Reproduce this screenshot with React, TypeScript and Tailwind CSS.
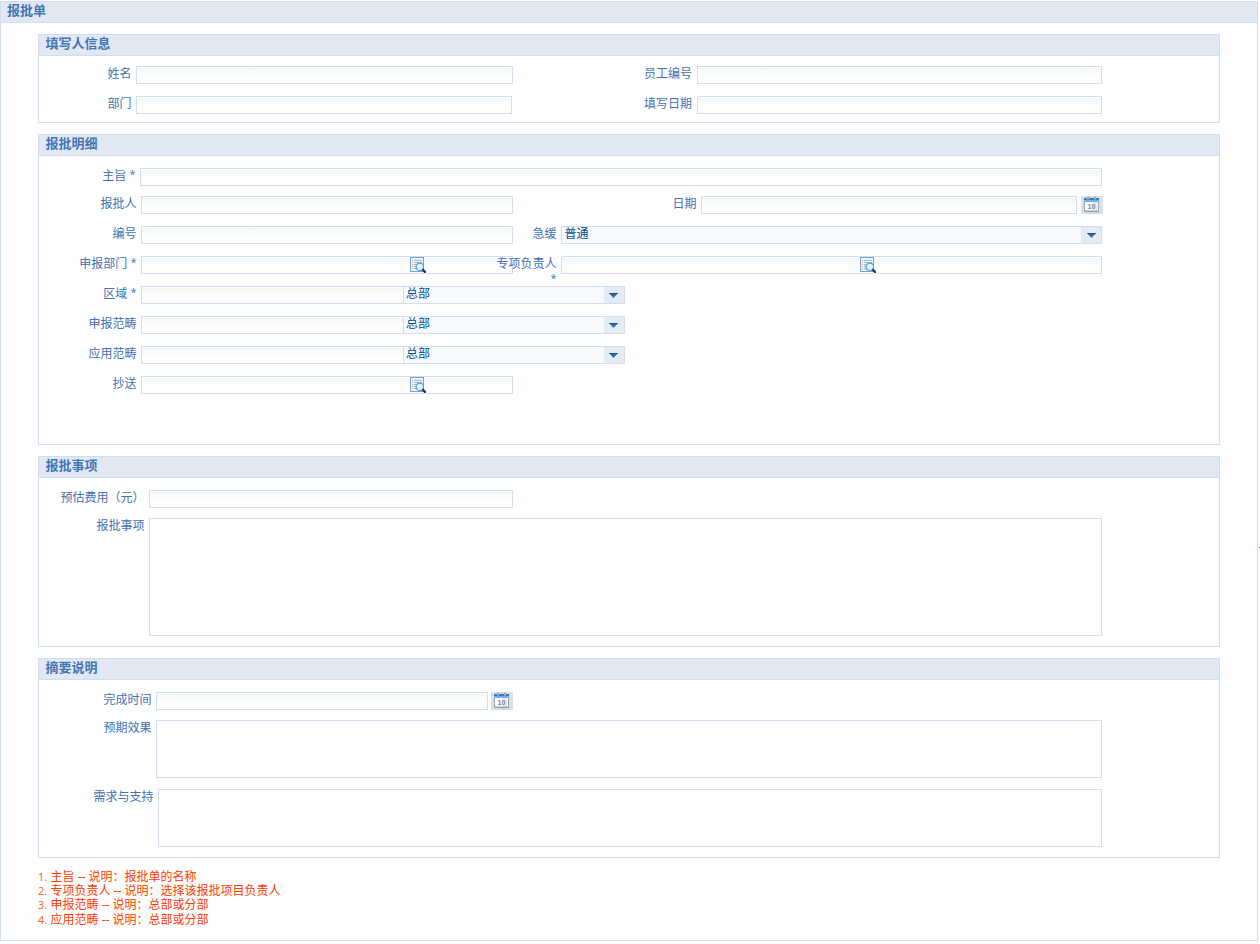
import React from "react";

function Section({ title, className, children }: { title: string; className: string; children: React.ReactNode }) {
  return (
    <section className={`w-[1182px] border border-[#d2deec] ${className}`}>
      <h2 className="h-[21px] border-b border-[#d2deec] bg-[#e1e8f4] pl-[6.5px] text-[13px] leading-[16px] font-bold text-[#4677b3]">
        {title}
      </h2>
      {children}
    </section>
  );
}

function Star() {
  return <span className="inline-block h-[12px] w-[6px] text-center align-top text-[11px] leading-[12px] font-medium text-[#4b8fcf]">*</span>;
}

function Label({ className, children, required }: { className: string; children: string; required?: boolean }) {
  return (
    <label className={`h-[16px] shrink-0 pr-[0.5px] whitespace-pre text-right leading-[16px] ${className}`}>
      {children}
      {required && <> <Star /></>}
    </label>
  );
}

function Field({ className, children }: { className: string; children?: React.ReactNode }) {
  return (
    <div className={`flex h-[18px] shrink-0 border border-[#d2deec] bg-linear-to-b from-white from-[6%] via-[#f5f6fa] via-[7%] to-[#fefefe] to-[50%] ${className}`}>
      {children}
    </div>
  );
}

function Area({ className }: { className: string }) {
  return <div className={`shrink-0 border border-[#d2deec] bg-[#fefefe] ${className}`} />;
}

function Select({ value, className, arrow }: { value: string; className: string; arrow: string }) {
  return (
    <div className={`flex h-[18px] shrink-0 justify-between border border-[#d2deec] bg-[#f7f9fd] text-[#00508a] ${className}`}>
      <span className="leading-[14px]">{value}</span>
      <span className={`flex w-[20px] bg-[#e3ecf5] pt-[6px] ${arrow}`}>
        <svg width="9" height="5" viewBox="0 0 9 5">
          <path d="M0 0H9L4.5 5Z" fill="#2f70b0" />
          <path d="M0 0H9L8 1.2H1Z" fill="#24508a" />
        </svg>
      </span>
    </div>
  );
}

function CalendarButton({ className }: { className: string }) {
  return (
    <button className={`h-[18px] w-[22px] shrink-0 bg-linear-to-r from-[#dde1e8] via-[#cfd6e0] to-[#dfe3e9] ${className}`}>
      <svg width="22" height="18" viewBox="0 0 22 18">
        <path d="M3 2H18V15Q18 16 17 16H4Q3 16 3 15Z" fill="#96a5b4" />
        <rect x="4" y="5" width="13" height="9.5" fill="#fbfcfe" />
        <rect x="12" y="6" width="4" height="8" fill="#e5e6ef" />
        <rect x="3" y="2" width="15" height="2" fill="#3b7ac4" />
        <rect x="3" y="4" width="15" height="2" fill="#6fb2ea" />
        <path d="M6 1H8V3H6ZM13 1H15V3H13Z" fill="#708397" />
        <path d="M6.5 1.5H7.5V3.5H6.5ZM13.5 1.5H14.5V3.5H13.5Z" fill="#e6edf4" />
        <text x="10.5" y="13" textAnchor="middle" fontSize="7" fontWeight="700" fontFamily="Liberation Sans, sans-serif" fill="#808285">10</text>
      </svg>
    </button>
  );
}

function LookupIcon() {
  return (
    <svg width="16" height="16" viewBox="0 0 16 16" className="shrink-0">
      <rect x="0.5" y="0.5" width="13" height="14" fill="#edf5fc" stroke="#6ea5d3" />
      <path d="M4 3.5H12M4 5.5H12M4 7.5H9M4 9.5H7M4 11.5H7" stroke="#a3b9cb" />
      <path d="M2 3.5H3M2 5.5H3M2 7.5H3M2 9.5H3M2 11.5H3" stroke="#ee9b76" />
      <circle cx="9.8" cy="9.8" r="3.7" fill="#def5ff" stroke="#5c9fd2" strokeWidth="1.2" />
      <path d="M12.4 12.4L15.8 15.8" stroke="#30363c" strokeWidth="2.3" />
    </svg>
  );
}

const notes: [string, string][] = [
  ["主旨", "报批单的名称"],
  ["专项负责人", "选择该报批项目负责人"],
  ["申报范畴", "总部或分部"],
  ["应用范畴", "总部或分部"],
];

const regionRows: [string, boolean][] = [
  ["区域", true],
  ["申报范畴", false],
  ["应用范畴", false],
];

export default function App() {
  return (
    <div className="relative h-[944px] w-[1260px] overflow-hidden bg-[#fefefe] pt-px font-['Noto_Sans','Noto_Sans_CJK_SC',sans-serif] text-[12px] text-[#4272b0]">
      <main className="h-[940px] w-[1258px] border border-[#d2deec]">
        <h1 className="h-[21px] border-b border-[#d2deec] bg-[#e1e8f4] pl-[6px] text-[13px] leading-[16px] font-bold text-[#4677b3]">
          报批单
        </h1>
        <div className="pt-[11px] pl-[37px]">
          <Section title="填写人信息" className="h-[89px]">
            <div className="mt-[10px] flex">
              <Label className="w-[93px]">姓名</Label>
              <Field className="ml-[4px] w-[377px]" />
              <Label className="w-[179.5px]">员工编号</Label>
              <Field className="ml-[4.5px] w-[405px]" />
            </div>
            <div className="mt-[12px] flex">
              <Label className="w-[93px]">部门</Label>
              <Field className="ml-[4px] w-[376px]" />
              <Label className="w-[180.5px]">填写日期</Label>
              <Field className="ml-[4.5px] w-[405px]" />
            </div>
          </Section>

          <Section title="报批明细" className="mt-[11px] h-[311px]">
            <div className="mt-[12px] flex">
              <Label className="w-[97px]" required>主旨</Label>
              <Field className="ml-[4px] w-[962px]" />
            </div>
            <div className="mt-[10px] flex">
              <Label className="w-[98px]">报批人</Label>
              <Field className="ml-[4px] w-[372px]" />
              <Label className="w-[184px]">日期</Label>
              <Field className="ml-[4px] w-[376px]" />
              <CalendarButton className="ml-[4px]" />
            </div>
            <div className="mt-[12px] flex">
              <Label className="w-[98px]">编号</Label>
              <Field className="ml-[4px] w-[372px]" />
              <Label className="w-[44px]">急缓</Label>
              <Select className="ml-[4px] w-[541px] pl-[2.5px]" arrow="pl-[6px]" value="普通" />
            </div>
            <div className="mt-[12px] flex h-[18px]">
              <Label className="w-[98px]" required>申报部门</Label>
              <Field className="ml-[4px] w-[372px] pl-[268px]"><LookupIcon /></Field>
              <div className="z-10 -ml-[18px] flex w-[62px] flex-col items-end pr-[0.5px] leading-[16px]">
                <span className="shrink-0">专项负责人</span>
                <Star />
              </div>
              <Field className="ml-[4px] w-[541px] pl-[298px]"><LookupIcon /></Field>
            </div>
            {regionRows.map(([name, required]) => (
              <div key={name} className="mt-[12px] flex">
                <Label className="w-[98px]" required={required}>{name}</Label>
                <Field className="ml-[4px] w-[262px] border-r-0" />
                <Select className="w-[222px] pl-[2px]" arrow="pl-[5px]" value="总部" />
              </div>
            ))}
            <div className="mt-[12px] flex">
              <Label className="w-[98px]">抄送</Label>
              <Field className="ml-[4px] w-[372px] pl-[268px]"><LookupIcon /></Field>
            </div>
          </Section>

          <Section title="报批事项" className="mt-[11px] h-[191px]">
            <div className="mt-[12px] flex">
              <Label className="w-[106px]">预估费用（元）</Label>
              <Field className="ml-[4px] w-[364px]" />
            </div>
            <div className="mt-[10px] flex">
              <Label className="w-[106px]">报批事项</Label>
              <Area className="ml-[4px] h-[118px] w-[953px]" />
            </div>
          </Section>

          <Section title="摘要说明" className="mt-[11px] h-[200px]">
            <div className="mt-[12px] flex">
              <Label className="w-[113px]">完成时间</Label>
              <Field className="ml-[4px] w-[332px]" />
              <CalendarButton className="ml-[3px]" />
            </div>
            <div className="mt-[10px] flex">
              <Label className="w-[113px]">预期效果</Label>
              <Area className="ml-[4px] h-[58px] w-[946px]" />
            </div>
            <div className="mt-[11px] flex">
              <Label className="w-[115px]">需求与支持</Label>
              <Area className="ml-[4px] h-[58px] w-[944px]" />
            </div>
          </Section>

          <ol className="mt-[11.6px] text-[#ff3b00]">
            {notes.map(([name, text], i) => (
              <li key={name} className="flex h-[14.4px] leading-[14.4px]">
                <span className="w-[12.5px] text-[11px] text-[#f06a30]">{i + 1}.</span>
                <span className="whitespace-pre">{name} -- 说明：{text}</span>
              </li>
            ))}
          </ol>
        </div>
      </main>
      <span className="absolute top-[547px] left-[1259px] h-px w-px bg-[#3f6f9f]" />
    </div>
  );
}
